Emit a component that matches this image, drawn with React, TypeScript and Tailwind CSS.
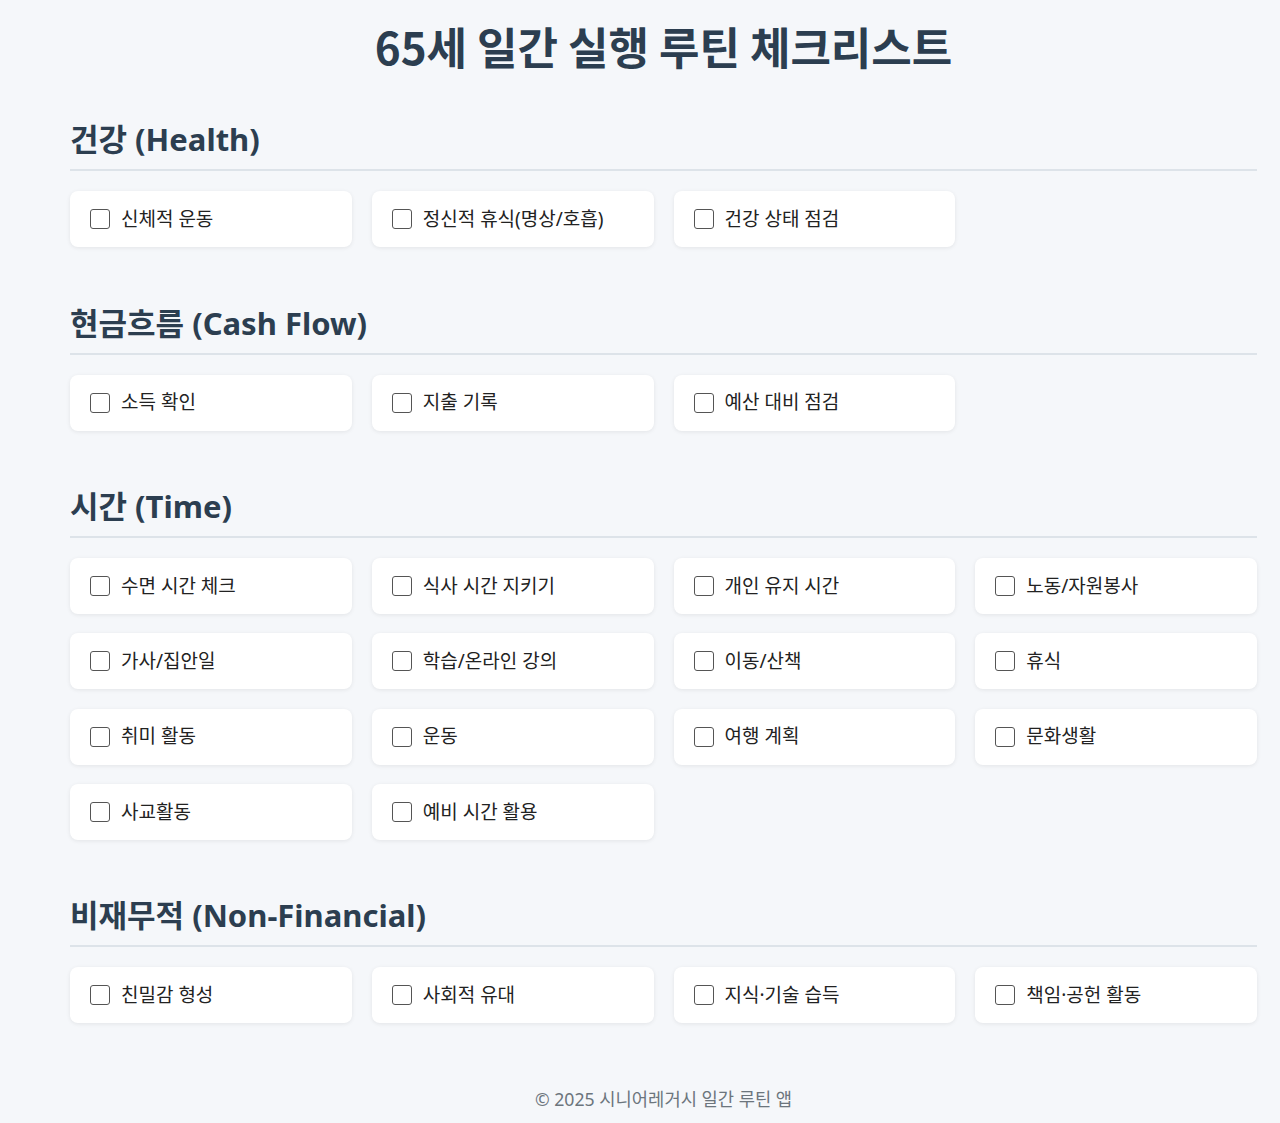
const sections = [
  { title: "건강 (Health)", items: ["신체적 운동", "정신적 휴식(명상/호흡)", "건강 상태 점검"] },
  { title: "현금흐름 (Cash Flow)", items: ["소득 확인", "지출 기록", "예산 대비 점검"] },
  {
    title: "시간 (Time)",
    items: [
      "수면 시간 체크",
      "식사 시간 지키기",
      "개인 유지 시간",
      "노동/자원봉사",
      "가사/집안일",
      "학습/온라인 강의",
      "이동/산책",
      "휴식",
      "취미 활동",
      "운동",
      "여행 계획",
      "문화생활",
      "사교활동",
      "예비 시간 활용",
    ],
  },
  { title: "비재무적 (Non-Financial)", items: ["친밀감 형성", "사회적 유대", "지식·기술 습득", "책임·공헌 활동"] },
];

const App = () => {
  return (
    <div className="min-h-[1123px] bg-[#f5f7fa] font-['Noto_Sans','Noto_Sans_CJK_KR',sans-serif]">
      <div className="ml-[70px] w-[1187px] pt-[16px] pb-[10px]">
        <h1 className="text-center font-['Noto_Sans_CJK_KR',sans-serif] text-[44px] font-bold leading-[60px] text-[#2c3e50]">
          65세 일간 실행 루틴 체크리스트
        </h1>

        {sections.map((s, i) => (
          <section key={s.title} className={i === 0 ? "mt-[43px]" : "mt-[55.5px]"}>
            <h2 className="border-b-2 border-[#dde3e9] pb-[10px] text-[31px] font-bold leading-[40px] text-[#2c3e50]">
              {s.title}
            </h2>
            <div className="mt-[20px] grid grid-cols-4 gap-x-5 gap-y-[19.33px]">
              {s.items.map((item) => (
                <label
                  key={item}
                  className="flex h-[56px] items-center gap-[11px] rounded-lg bg-white pl-[20px] shadow-[0_1px_4px_rgba(0,0,0,0.08)]"
                >
                  <span className="h-[20px] w-[20px] rounded-[3px] border-[1.5px] border-[#555]" />
                  <span className="text-[19px] text-[#222]">{item}</span>
                </label>
              ))}
            </div>
          </section>
        ))}

        <footer className="mt-[63px] text-center text-[17.7px] text-[#6c757d]">© 2025 시니어레거시 일간 루틴 앱</footer>
      </div>
    </div>
  );
};

export default App;
